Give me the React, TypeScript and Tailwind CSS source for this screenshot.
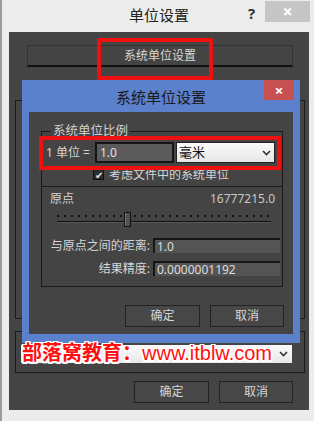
const ui = { fontFamily: '"Noto Sans", "Noto Sans CJK SC", sans-serif' }

function Chevron({ className }: { className?: string }) {
  return (
    <svg width="9" height="6" viewBox="0 0 9 6" className={className}>
      <path d="M1 1 L4.5 4.5 L8 1" fill="none" stroke="#333" strokeWidth="1.6" />
    </svg>
  )
}

function Btn({ label, w }: { label: string; w: string }) {
  return (
    <div className={`${w} h-[22px] flex items-center justify-center border border-[#222] bg-[#474747] text-[12px] text-[#d6d6d6]`}>
      {label}
    </div>
  )
}

function Field({ label, value }: { label: string; value: string }) {
  return (
    <div className="flex items-center h-[15px]">
      <span className="w-[110px] text-right text-[12px] text-[#d6d6d6] pr-[2px] leading-none">{label}</span>
      <div className="ml-[1px] w-[127px] h-[15px] bg-[#545454] border-t-2 border-l-2 border-[#151515] flex items-center pl-[2px] text-[12px] text-[#dcdcdc] leading-none">
        {value}
      </div>
    </div>
  )
}

function Slider() {
  const dots = []
  for (let x = 15; x <= 229; x += 7) dots.push(<rect key={x} x={x} y={4} width={2} height={2} fill="#111" />)
  return (
    <svg width="241" height="18" className="block">
      {dots}
      <line x1="15" y1="10.5" x2="229" y2="10.5" stroke="#111" strokeWidth="1" />
      <line x1="15" y1="11.5" x2="229" y2="11.5" stroke="#5a5a5a" strokeWidth="1" />
      <rect x="82.5" y="1.5" width="6" height="14" fill="#505050" stroke="#111" />
      <line x1="83.5" y1="2" x2="83.5" y2="15" stroke="#777" />
    </svg>
  )
}

function UnitDialog() {
  return (
    <div className="absolute left-[20px] top-[80px] w-[278px] h-[263px] bg-[#5b80cc] flex flex-col">
      <div className="relative h-[32px] flex justify-center">
        <span className="mt-[6px] text-[15px] text-[#1a1a1a]">系统单位设置</span>
        <div className="absolute right-[6px] top-0 w-[30px] h-[20px] bg-[#c75050] flex items-center justify-center text-white text-[15px] font-bold leading-none">×</div>
      </div>
      <div className="mx-[7px] h-[222px] bg-[#444] flex flex-col">
        <div className="relative ml-[12px] mt-[19px] w-[242px] h-[156px] border border-[#1a1a1a] flex flex-col">
          <span className="absolute left-[9px] top-[-7px] px-[2px] bg-[#444] text-[12.5px] leading-none text-[#d0d0d0]">系统单位比例</span>
          <div className="flex items-center mt-[10px] pl-[4px] h-[21px]">
            <span className="w-[49px] text-[12px] text-[#d6d6d6] leading-none">1 单位 =</span>
            <div className="w-[79px] h-[21px] bg-[#5a5a5a] border-2 border-[#151515] flex items-center pl-[3px] text-[12px] text-[#e0e0e0]">1.0</div>
            <div className="ml-[2px] w-[99px] h-[21px] bg-gradient-to-b from-[#fafafa] to-[#e6e6e6] border border-[#222] flex items-center justify-between pl-[2px] pr-[3px] text-[13px] text-[#111]">
              <span>毫米</span>
              <Chevron />
            </div>
          </div>
          <div className="flex items-center mt-[5px] ml-[51px] h-[13px] gap-[5px]">
            <div className="w-[11px] h-[11px] bg-[#2c2c2c] border border-[#111] flex items-center justify-center text-[10px] text-[#e8e8e8] leading-none">✔</div>
            <span className="text-[12px] text-[#d6d6d6] leading-none">考虑文件中的系统单位</span>
          </div>
          <div className="mt-[5px] h-px bg-[#1a1a1a]" />
          <div className="flex items-center justify-between mt-[4px] pl-[8px] pr-[7px] h-[15px]">
            <span className="text-[12px] text-[#d6d6d6] leading-none">原点</span>
            <span className="text-[12px] text-[#c8c8c8] leading-none">16777215.0</span>
          </div>
          <div className="mt-[5px]">
            <Slider />
          </div>
          <div className="mt-[9px] flex flex-col gap-[8px]">
            <Field label="与原点之间的距离:" value="1.0" />
            <Field label="结果精度:" value="0.0000001192" />
          </div>
        </div>
        <div className="flex justify-end gap-[10px] mt-[18px] pr-[9px]">
          <Btn label="确定" w="w-[75px]" />
          <Btn label="取消" w="w-[74px]" />
        </div>
      </div>
    </div>
  )
}

export default function App() {
  return (
    <div className="relative w-[314px] h-[421px] bg-[#ececec] border-l-2 border-[#9c9c9c] overflow-hidden" style={ui}>
      <div className="relative h-[32px] flex justify-center">
        <span className="mt-[4px] ml-[2px] text-[15px] text-[#222]">单位设置</span>
        <span className="absolute left-[246px] top-[2px] text-[15px] font-bold text-[#333]">?</span>
        <div className="absolute left-[263px] top-[1px] w-[45px] h-[21px] bg-[#c6c6c6] flex items-center justify-center text-white text-[17px] font-bold leading-none">×</div>
      </div>
      <div className="ml-[7px] w-[300px] h-[378px] bg-[#444] flex flex-col">
        <div className="ml-[18px] mt-[13px] w-[266px] h-[22px] border-t border-x border-[#333] border-b-2 border-b-[#111] flex items-center justify-center text-[12px] text-[#d6d6d6]">
          系统单位设置
        </div>
        <div className="ml-[6px] mt-[33px] w-[290px] h-[219px] border border-[#1a1a1a]" />
        <div className="ml-[6px] mt-[12px] w-[290px] h-[42px] border border-[#1a1a1a]">
          <div className="ml-[5px] mt-[13px] w-[271px] h-[18px] bg-gradient-to-b from-[#fafafa] to-[#e8e8e8] flex items-center justify-end pr-[4px]">
            <Chevron />
          </div>
        </div>
        <div className="flex justify-end gap-[10px] mt-[8px] pr-[16px]">
          <Btn label="确定" w="w-[75px]" />
          <Btn label="取消" w="w-[74px]" />
        </div>
      </div>

      <UnitDialog />

      <div className="absolute left-[95px] top-[38px] w-[116px] h-[42px] border-4 border-[#ee1111]" />
      <div className="absolute left-[37px] top-[136px] w-[242px] h-[34px] border-4 border-[#ee1111]" />

      <div
        className="absolute left-[20px] top-[340px] text-[20px] text-[#ff1010] leading-[26px] whitespace-nowrap [text-shadow:1.5px_0_0_#fff,-1.5px_0_0_#fff,0_1.5px_0_#fff,0_-1.5px_0_#fff,1.5px_1.5px_0_#fff,-1.5px_-1.5px_0_#fff,1.5px_-1.5px_0_#fff,-1.5px_1.5px_0_#fff]"
        style={{ fontFamily: '"Liberation Sans", "Noto Sans CJK SC", sans-serif' }}
      >
        <span className="font-bold">部落窝教育：</span>www.itblw.com
      </div>
    </div>
  )
}
